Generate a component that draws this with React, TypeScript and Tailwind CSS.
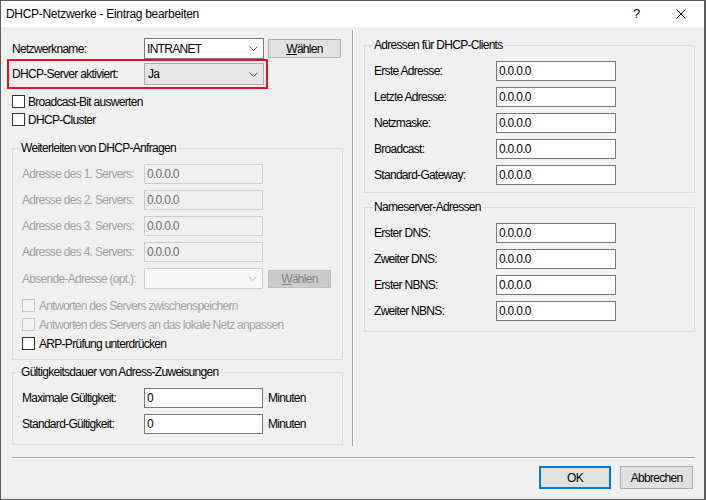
import React from 'react';

function Chevron({ color }: { color: string }) {
  return (
    <svg width="9" height="5" viewBox="0 0 9 5" className="shrink-0">
      <polyline points="0.5,0.5 4.5,4.5 8.5,0.5" fill="none" stroke={color} strokeWidth="1" />
    </svg>
  );
}

function Box({ disabled }: { disabled?: boolean }) {
  return (
    <span
      className={
        disabled
          ? 'h-[13px] w-[13px] shrink-0 border border-[#c4c4c4] bg-[#f4f4f4]'
          : 'h-[13px] w-[13px] shrink-0 border border-[#333333] bg-white'
      }
    />
  );
}

function Field({ value, wide }: { value: string; wide?: boolean }) {
  return (
    <div
      className={
        (wide ? 'w-[120px] ' : 'w-[119px] ') +
        'flex h-[20px] items-center border border-[#7a7a7a] bg-white pl-[2px] text-black'
      }
    >
      {value}
    </div>
  );
}

function GreyField() {
  return (
    <div className="flex h-[20px] w-[119px] items-center border border-[#cccccc] bg-[#f0f0f0] pl-[2px] text-[#6d6d6d]">
      0.0.0.0
    </div>
  );
}

const forwardRows = [
  'Adresse des 1. Servers:',
  'Adresse des 2. Servers:',
  'Adresse des 3. Servers:',
  'Adresse des 4. Servers:',
];

const clientRows = ['Erste Adresse:', 'Letzte Adresse:', 'Netzmaske:', 'Broadcast:', 'Standard-Gateway:'];
const nameRows = ['Erster DNS:', 'Zweiter DNS:', 'Erster NBNS:', 'Zweiter NBNS:'];

export default function App() {
  return (
    <div className="flex h-[500px] w-[706px] flex-col overflow-hidden border border-r-2 border-[#5c5c5c] bg-[#f0f0f0] font-['Liberation_Sans',Arial,sans-serif] text-[12px] leading-[14px] tracking-[-0.7px] text-black">
      {/* title bar */}
      <div className="flex h-[26px] shrink-0 items-center bg-white pl-[5px] pr-[18px] tracking-[-0.3px]">
        <span>DHCP-Netzwerke - Eintrag bearbeiten</span>
        <div className="ml-auto flex items-center gap-[36px]">
          <span className="text-[13px]">?</span>
          <svg width="10" height="10" viewBox="0 0 10 10">
            <path d="M0.5 0.5L9.5 9.5M9.5 0.5L0.5 9.5" stroke="#000" strokeWidth="1" fill="none" />
          </svg>
        </div>
      </div>

      <div className="flex h-[420px] shrink-0">
        {/* left column */}
        <div className="flex w-[351px] shrink-0 flex-col pl-[11px] pt-[11px]">
          <div className="flex h-[21px] items-center">
            <span className="w-[132px] shrink-0">Netzwerkname:</span>
            <div className="flex h-[21px] w-[120px] items-center justify-between border border-[#7a7a7a] bg-white pl-[2px] pr-[5px]">
              <span>INTRANET</span>
              <Chevron color="#5a5a5a" />
            </div>
            <button className="ml-[4px] flex h-[19px] w-[73px] items-center justify-center border border-[#adadad] bg-[#e1e1e1]">
              <span>
                <span className="underline">W</span>ählen
              </span>
            </button>
          </div>

          <div className="-ml-[5px] flex h-[30px] w-[261px] items-center border-2 border-[#e81123] pl-[3px]">
            <span className="w-[132px] shrink-0">DHCP-Server aktiviert:</span>
            <div className="flex h-[22px] w-[120px] items-center justify-between border border-[#adadad] bg-[#e5e5e5] pl-[3px] pr-[5px]">
              <span>Ja</span>
              <Chevron color="#5a5a5a" />
            </div>
          </div>

          <div className="mt-[6px] flex h-[13px] items-center gap-[3px]">
            <Box />
            <span>Broadcast-Bit auswerten</span>
          </div>
          <div className="mt-[5px] flex h-[13px] items-center gap-[3px]">
            <Box />
            <span>DHCP-Cluster</span>
          </div>

          <fieldset className="mt-[15px] w-[331px] border border-[#dcdcdc]">
            <legend className="ml-[7px] px-[1px]">Weiterleiten von DHCP-Anfragen</legend>
            <div className="flex flex-col pb-[9px] pl-[9px] pt-[9px]">
              <div className="flex flex-col gap-[6px]">
                {forwardRows.map((r) => (
                  <div key={r} className="flex items-center">
                    <span className="w-[122px] shrink-0 text-[#a0a0a0]">{r}</span>
                    <GreyField />
                  </div>
                ))}
              </div>
              <div className="mt-[6px] flex items-center">
                <span className="w-[122px] shrink-0 text-[#a0a0a0]">Absende-Adresse (opt.):</span>
                <div className="flex h-[21px] w-[119px] items-center justify-end border border-[#cccccc] bg-[#f7f7f7] pr-[5px]">
                  <Chevron color="#bdbdbd" />
                </div>
                <button className="ml-[5px] flex h-[18px] w-[63px] items-center justify-center border border-[#bfbfbf] bg-[#cccccc] text-[#838383]">
                  <span>
                    <span className="underline">W</span>ählen
                  </span>
                </button>
              </div>
              <div className="mt-[10px] flex h-[13px] items-center gap-[4px] text-[#a0a0a0]">
                <Box disabled />
                <span>Antworten des Servers zwischenspeichern</span>
              </div>
              <div className="mt-[6px] flex h-[13px] items-center gap-[4px] text-[#a0a0a0]">
                <Box disabled />
                <span>Antworten des Servers an das lokale Netz anpassen</span>
              </div>
              <div className="mt-[6px] flex h-[13px] items-center gap-[4px]">
                <Box />
                <span>ARP-Prüfung unterdrücken</span>
              </div>
            </div>
          </fieldset>

          <fieldset className="mt-[5px] w-[331px] border border-[#dcdcdc]">
            <legend className="ml-[7px] px-[1px]">Gültigkeitsdauer von Adress-Zuweisungen</legend>
            <div className="flex flex-col gap-[6px] pb-[10px] pl-[9px] pt-[9px]">
              {['Maximale Gültigkeit:', 'Standard-Gültigkeit:'].map((r) => (
                <div key={r} className="flex items-center">
                  <span className="w-[122px] shrink-0">{r}</span>
                  <Field value="0" />
                  <span className="ml-[5px]">Minuten</span>
                </div>
              ))}
            </div>
          </fieldset>
        </div>

        {/* vertical separator */}
        <div className="mt-[3px] h-[416px] w-[2px] shrink-0 border-l border-[#a0a0a0] bg-white" />

        {/* right column */}
        <div className="flex flex-col pl-[10px] pt-[11px]">
          <fieldset className="w-[331px] border border-[#dcdcdc]">
            <legend className="ml-[8px] px-[1px]">Adressen für DHCP-Clients</legend>
            <div className="flex flex-col gap-[6px] pb-[7px] pl-[9px] pt-[9px]">
              {clientRows.map((r) => (
                <div key={r} className="flex items-center">
                  <span className="w-[122px] shrink-0">{r}</span>
                  <Field value="0.0.0.0" wide />
                </div>
              ))}
            </div>
          </fieldset>

          <fieldset className="mt-[7px] w-[331px] border border-[#dcdcdc]">
            <legend className="ml-[8px] px-[1px]">Nameserver-Adressen</legend>
            <div className="flex flex-col gap-[6px] pb-[10px] pl-[9px] pt-[9px]">
              {nameRows.map((r) => (
                <div key={r} className="flex items-center">
                  <span className="w-[122px] shrink-0">{r}</span>
                  <Field value="0.0.0.0" wide />
                </div>
              ))}
            </div>
          </fieldset>
        </div>
      </div>

      {/* horizontal separator */}
      <div className="ml-[11px] mt-[10px] h-[2px] w-[683px] shrink-0 border-t border-[#a0a0a0] bg-white" />

      <div className="mt-[7px] flex justify-end gap-[9px] pr-[11px]">
        <button className="flex h-[23px] w-[72px] items-center justify-center border-2 border-[#0078d7] bg-[#e1e1e1]">
          OK
        </button>
        <button className="flex h-[23px] w-[73px] items-center justify-center border border-[#adadad] bg-[#e1e1e1]">
          Abbrechen
        </button>
      </div>
    </div>
  );
}
